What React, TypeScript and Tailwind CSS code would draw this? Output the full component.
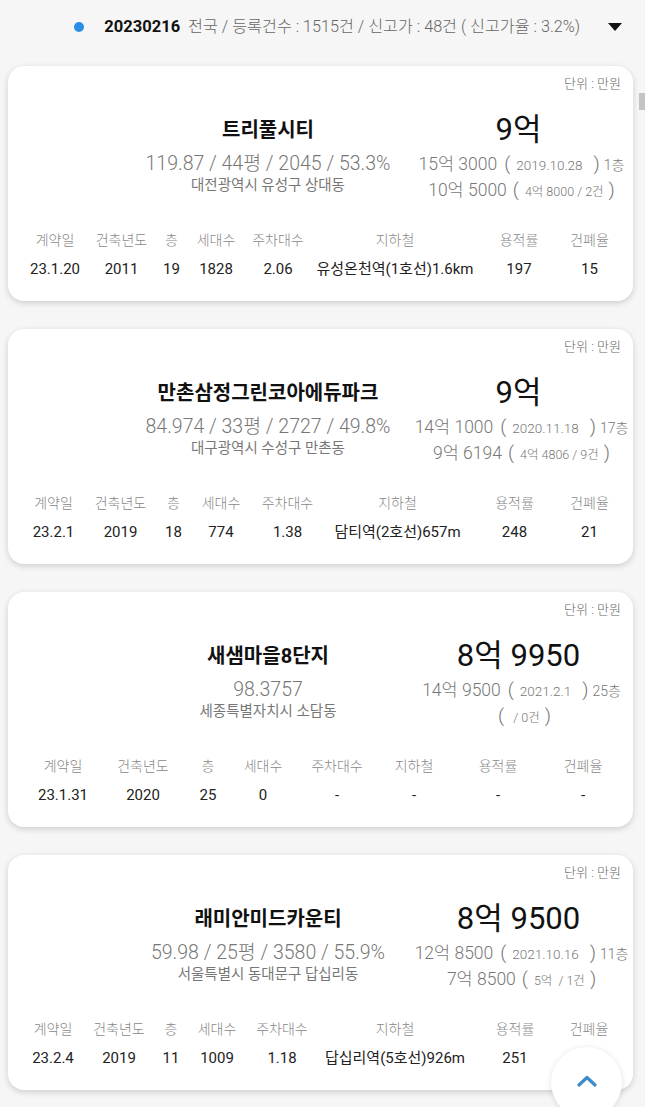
import React from "react";

type Card = {
  name: string;
  stats: string;
  addr: string;
  price: string;
  high: string;
  highDate: string;
  highFloor: string;
  avg: string;
  avgSub: string;
  row: string[];
  cols: string;
};

const cards: Card[] = [
  {
    name: "트리풀시티",
    stats: "119.87 / 44평 / 2045 / 53.3%",
    addr: "대전광역시 유성구 상대동",
    price: "9억",
    high: "15억 3000",
    highDate: "2019.10.28",
    highFloor: "1층",
    avg: "10억 5000",
    avgSub: "4억 8000 / 2건",
    row: ["23.1.20", "2011", "19", "1828", "2.06", "유성온천역(1호선)1.6km", "197", "15"],
    cols: "grid-cols-[66px_67px_33px_56px_68px_166px_82px_59px]",
  },
  {
    name: "만촌삼정그린코아에듀파크",
    stats: "84.974 / 33평 / 2727 / 49.8%",
    addr: "대구광역시 수성구 만촌동",
    price: "9억",
    high: "14억 1000",
    highDate: "2020.11.18",
    highFloor: "17층",
    avg: "9억 6194",
    avgSub: "4억 4806 / 9건",
    row: ["23.2.1", "2019", "18", "774", "1.38", "담티역(2호선)657m", "248", "21"],
    cols: "grid-cols-[63px_71px_35px_60px_73px_147px_87px_63px]",
  },
  {
    name: "새샘마을8단지",
    stats: "98.3757",
    addr: "세종특별자치시 소담동",
    price: "8억 9950",
    high: "14억 9500",
    highDate: "2021.2.1",
    highFloor: "25층",
    avg: "",
    avgSub: " / 0건",
    row: ["23.1.31", "2020", "25", "0", "-", "-", "-", "-"],
    cols: "grid-cols-[82px_78px_52px_58px_90px_64px_104px_66px]",
  },
  {
    name: "래미안미드카운티",
    stats: "59.98 / 25평 / 3580 / 55.9%",
    addr: "서울특별시 동대문구 답십리동",
    price: "8억 9500",
    high: "12억 8500",
    highDate: "2021.10.16",
    highFloor: "11층",
    avg: "7억 8500",
    avgSub: "5억  / 1건",
    row: ["23.2.4", "2019", "11", "1009", "1.18", "답십리역(5호선)926m", "251", ""],
    cols: "grid-cols-[62px_70px_34px_58px_72px_154px_86px_62px]",
  },
];

const heads = ["계약일", "건축년도", "층", "세대수", "주차대수", "지하철", "용적률", "건폐율"];

const FONT = { fontFamily: 'Roboto, "Noto Sans CJK KR", sans-serif' };

function CardView({ c }: { c: Card }) {
  return (
    <div className="ml-[8px] mr-[12px] h-[235px] rounded-[16px] bg-white shadow-[0_2px_6px_rgba(0,0,0,0.17)] px-[12px] pt-[10px] box-border">
      <div className="flex justify-end text-[13px] leading-[16px] text-[#666] font-light">단위 : 만원</div>
      <div className="flex mt-[14px]">
        <div className="ml-[108px] w-[280px] flex flex-col items-center">
          <div className="text-[20px] leading-[48px] font-bold text-[#111] whitespace-nowrap">{c.name}</div>
          <div className="text-[19.5px] leading-[20px] font-light text-[#777] whitespace-nowrap">{c.stats}</div>
          <div className="text-[14.5px] leading-[24px] text-[#777] whitespace-nowrap">{c.addr}</div>
        </div>
        <div className="ml-[14px] w-[199px] flex flex-col items-center">
          <div className="text-[31px] leading-[48px] font-normal text-[#111] whitespace-nowrap -ml-[6px]">{c.price}</div>
          <div className="leading-[20px] font-light text-[#777] whitespace-nowrap flex items-baseline">
            <span className="text-[17.5px]">{c.high}</span>
            <span className="text-[19px] ml-[7px]">(</span>
            <span className="text-[13.5px] ml-[6px]">{c.highDate}</span>
            <span className="text-[19px] ml-[11px]">)</span>
            <span className="text-[14px] ml-[4px]">{c.highFloor}</span>
          </div>
          <div className="leading-[30px] font-light text-[#777] whitespace-nowrap flex items-baseline">
            <span className="text-[17.5px]">{c.avg}</span>
            <span className="text-[19px] ml-[6px]">(</span>
            <span className="text-[12.5px] ml-[6px] whitespace-pre">{c.avgSub}</span>
            <span className="text-[19px] ml-[5px]">)</span>
          </div>
        </div>
      </div>
      <div className={`grid ${c.cols} ml-[2px] mt-[19px] justify-items-center`}>
        {heads.map((h) => (
          <div key={h} className="h-[28px] leading-[28px] text-[14px] font-light text-[#888] whitespace-nowrap">
            {h}
          </div>
        ))}
        {c.row.map((v, i) => (
          <div key={i} className="h-[30px] leading-[30px] text-[15px] font-normal text-[#222] whitespace-nowrap">
            {v}
          </div>
        ))}
      </div>
    </div>
  );
}

export default function App() {
  return (
    <div className="relative min-h-[1107px] w-[645px] bg-[#f6f6f6] overflow-hidden" style={FONT}>
      <div className="flex items-center justify-end h-[54px] pr-[23px]">
        <span className="w-[10px] h-[10px] rounded-full bg-[#2b8ee6] mr-[20px]" />
        <span className="text-[16.5px] font-bold text-[#111] mr-[8px]">20230216</span>
        <span className="text-[16.2px] font-light text-[#666]">전국 / 등록건수 : 1515건 / 신고가 : 48건 ( 신고가율 : 3.2%)</span>
        <svg width="14" height="9" viewBox="0 0 14 9" className="ml-[28px]">
          <path d="M0 0 H14 L7 8 Z" fill="#111" />
        </svg>
      </div>
      <div className="flex flex-col gap-[28px] pt-[12px]">
        {cards.map((c) => (
          <CardView key={c.name} c={c} />
        ))}
      </div>
      <div className="absolute right-0 top-[93px] w-[6px] h-[17px] bg-[#c4c4c4]" />
      <button className="absolute left-[551px] top-[1047px] w-[71px] h-[71px] rounded-full bg-white shadow-[0_1px_6px_rgba(0,0,0,0.12)] flex items-start justify-center pt-[28px]">
        <svg width="20" height="12" viewBox="0 0 20 12">
          <path d="M2 10 L10 2.5 L18 10" stroke="#3a8ccc" strokeWidth="3.2" fill="none" strokeLinecap="round" strokeLinejoin="round" />
        </svg>
      </button>
    </div>
  );
}
